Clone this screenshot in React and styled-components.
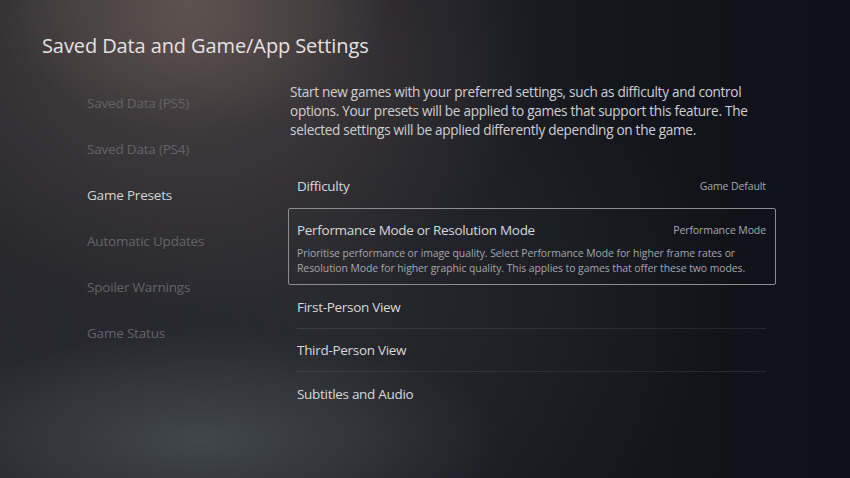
import React from "react";
import styled, { createGlobalStyle } from "styled-components";

const Global = createGlobalStyle`
  html, body { margin: 0; padding: 0; }
  body { background: #13151d; }
  * { box-sizing: border-box; }
`;

const Screen = styled.div`
  width: 850px;
  height: 478px;
  overflow: hidden;
  font-family: "Open Sans", "Noto Sans", sans-serif;
  color: #d6d6d8;
  background:
    radial-gradient(ellipse 200px 130px at 190px 0px, rgba(116, 102, 96, 0.5), rgba(116, 102, 96, 0) 100%),
    radial-gradient(ellipse 360px 270px at 190px 40px, rgba(86, 75, 73, 0.75), rgba(86, 75, 73, 0) 100%),
    radial-gradient(ellipse 300px 110px at 200px 440px, rgba(70, 76, 82, 0.85), rgba(70, 76, 82, 0) 100%),
    radial-gradient(ellipse 420px 300px at 300px 300px, rgba(46, 46, 52, 0.7), rgba(46, 46, 52, 0) 100%),
    linear-gradient(90deg, #24252a 0%, #22232a 25%, #191b23 55%, #11131b 85%, #0f111a 100%);
  display: flex;
  flex-direction: column;
`;

const Title = styled.h1`
  margin: 0;
  padding: 33px 0 0 42px;
  font-size: 20px;
  font-weight: 400;
  line-height: 26px;
  color: #e4e2e2;
  letter-spacing: -0.1px;
`;

const Body = styled.div`
  display: flex;
  padding-top: 21px;
`;

const SideNav = styled.nav`
  width: 288px;
  padding-left: 87px;
  display: flex;
  flex-direction: column;
`;

const NavItem = styled.div`
  height: 46px;
  line-height: 46px;
  font-size: 13.5px;
  letter-spacing: -0.2px;
  color: ${(p) => (p.$active ? "#d4d4d6" : "#646468")};
  white-space: nowrap;
`;

const Content = styled.div`
  width: 488px;
  display: flex;
  flex-direction: column;
`;

const Intro = styled.p`
  margin: 2px 0 0 2px;
  font-size: 13.6px;
  line-height: 19px;
  letter-spacing: -0.3px;
  color: #cfcfd2;
`;

const Row = styled.div`
  height: ${(p) => p.$h || 44}px;
  margin: ${(p) => p.$top || 0}px 10px 0 9px;
  display: flex;
  align-items: center;
  justify-content: space-between;
  border-bottom: ${(p) => (p.$line ? "1px solid rgba(255,255,255,0.09)" : "none")};
`;

const RowLabel = styled.span`
  font-size: 13.5px;
  letter-spacing: -0.3px;
  color: #d8d8da;
  white-space: nowrap;
`;

const RowValue = styled.span`
  font-size: 10.5px;
  letter-spacing: -0.1px;
  color: #a8a8ac;
  white-space: nowrap;
`;

const Focus = styled.div`
  height: 77px;
  border: 1.5px solid #8c8c92;
  border-radius: 2px;
  padding: 10px 9px 0 8px;
  display: flex;
  flex-direction: column;
`;

const FocusHead = styled.div`
  display: flex;
  justify-content: space-between;
  align-items: center;
  height: 22px;
`;

const FocusText = styled.p`
  margin: 4.5px 0 0;
  font-size: 10.4px;
  line-height: 15px;
  letter-spacing: -0.05px;
  color: #a6a6aa;
  white-space: nowrap;
`;

export default function App() {
  const nav = [
    "Saved Data (PS5)",
    "Saved Data (PS4)",
    "Game Presets",
    "Automatic Updates",
    "Spoiler Warnings",
    "Game Status",
  ];
  return (
    <>
      <Global />
      <Screen>
        <Title>Saved Data and Game/App Settings</Title>
        <Body>
          <SideNav>
            {nav.map((n) => (
              <NavItem key={n} $active={n === "Game Presets"}>
                {n}
              </NavItem>
            ))}
          </SideNav>
          <Content>
            <Intro>
              Start new games with your preferred settings, such as difficulty and control
              options. Your presets will be applied to games that support this feature. The
              selected settings will be applied differently depending on the game.
            </Intro>
            <Row $h={44} $top={25}>
              <RowLabel>Difficulty</RowLabel>
              <RowValue>Game Default</RowValue>
            </Row>
            <Focus>
              <FocusHead>
                <RowLabel>Performance Mode or Resolution Mode</RowLabel>
                <RowValue>Performance Mode</RowValue>
              </FocusHead>
              <FocusText>
                Prioritise performance or image quality. Select Performance Mode for higher frame rates or
                <br />
                Resolution Mode for higher graphic quality. This applies to games that offer these two modes.
              </FocusText>
            </Focus>
            <Row $line>
              <RowLabel>First-Person View</RowLabel>
            </Row>
            <Row $h={43} $line>
              <RowLabel>Third-Person View</RowLabel>
            </Row>
            <Row $h={44}>
              <RowLabel>Subtitles and Audio</RowLabel>
            </Row>
          </Content>
        </Body>
      </Screen>
    </>
  );
}
